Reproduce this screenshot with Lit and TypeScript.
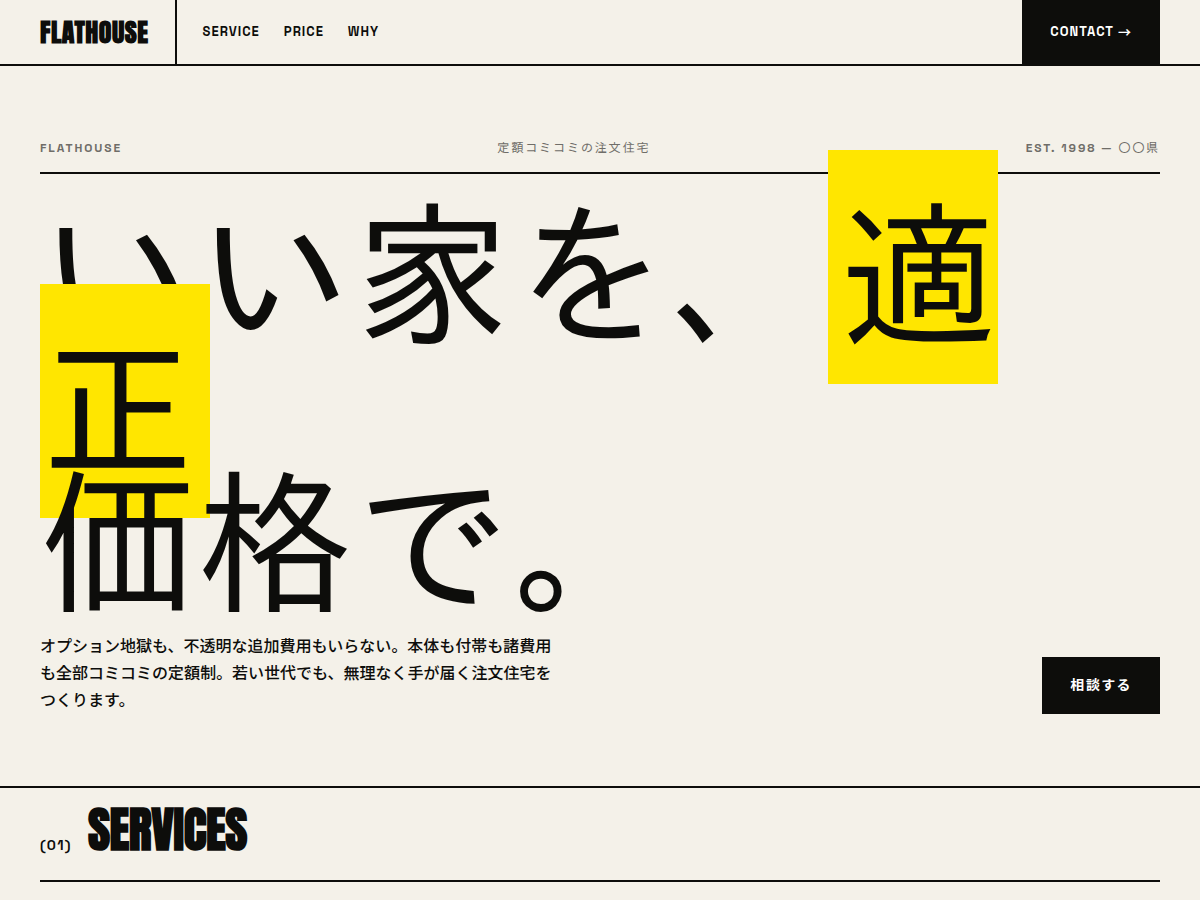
import { LitElement, html, css } from "lit";
import { customElement } from "lit/decorators.js";

@customElement("app-root")
export class AppRoot extends LitElement {
  static styles = css`
    :host {
      --ink: #0d0d0b;
      --paper: #f4f1e9;
      --accent: #ffe600;
      --label: "Space Grotesk", "Noto Sans JP", "Noto Sans CJK JP", sans-serif;
      --display: "Anton", "IPAGothic", "Noto Sans CJK JP", sans-serif;
      display: block;
      min-height: 100vh;
      background: var(--paper);
      color: var(--ink);
      font-family: var(--label);
    }
    * { box-sizing: border-box; }
    a { color: inherit; text-decoration: none; }
    .header {
      display: flex;
      align-items: stretch;
      height: 66px;
      padding: 0 40px;
      border-bottom: 2px solid var(--ink);
    }
    .logo {
      display: flex;
      align-items: center;
      padding-right: 26px;
      border-right: 2px solid var(--ink);
      font: 700 26px/40px var(--display);
      letter-spacing: 0.02em;
    }
    .nav, .contact {
      display: flex;
      align-items: center;
      font-size: 13px;
      line-height: 18px;
      letter-spacing: 1px;
    }
    .nav {
      gap: 24px;
      padding-left: 26px;
      font-weight: 600;
    }
    .contact {
      gap: 4px;
      margin-left: auto;
      padding: 0 28px;
      background: var(--ink);
      color: #fff;
      font-weight: 700;
    }
    .arrow { font-family: "Noto Sans CJK JP", sans-serif; }
    .hero {
      padding: 72px 40px;
      border-bottom: 2px solid var(--ink);
    }
    .meta {
      display: flex;
      justify-content: space-between;
      padding-bottom: 14px;
      border-bottom: 2px solid var(--ink);
      color: #6f6d68;
      font-size: 12px;
      font-weight: 600;
      line-height: 20px;
      letter-spacing: 0.16em;
    }
    .ja { font-weight: 400; }
    .headline {
      margin: 26px 0 31px;
      font-family: var(--display);
      font-size: 13vw;
      font-weight: 400;
      line-height: 0.86;
      letter-spacing: 0.01em;
    }
    .mark {
      padding: 0 0.08em;
      background: var(--accent);
      color: inherit;
    }
    .foot {
      display: flex;
      justify-content: space-between;
      align-items: flex-end;
      gap: 32px;
    }
    .lede {
      max-width: 520px;
      margin: 0;
      font-size: 16px;
      font-weight: 500;
      line-height: 27px;
    }
    .consult {
      padding: 18px 28px;
      border: 0;
      background: var(--ink);
      color: #fff;
      font: 700 14px/21px var(--label);
      letter-spacing: 0.1em;
    }
    .services { padding: 10px 40px 40px; }
    .section-head {
      display: flex;
      align-items: baseline;
      gap: 16px;
      padding-bottom: 18px;
      border-bottom: 2px solid var(--ink);
    }
    .num {
      font-size: 14px;
      font-weight: 600;
      letter-spacing: 0.1em;
    }
    .title {
      margin: 0;
      font: 700 48px/64px var(--display);
      letter-spacing: -0.01em;
    }
  `;

  render() {
    return html`
      <header class="header">
        <a class="logo" href="#">FLATHOUSE</a>
        <nav class="nav">
          <a href="#service">SERVICE</a>
          <a href="#price">PRICE</a>
          <a href="#why">WHY</a>
        </nav>
        <a class="contact" href="#contact">CONTACT <span class="arrow">→</span></a>
      </header>
      <main>
        <section class="hero">
          <div class="meta">
            <span>FLATHOUSE</span>
            <span class="ja" lang="ja">定額コミコミの注文住宅</span>
            <span lang="ja">EST. 1998 — <span class="ja">〇〇県</span></span>
          </div>
          <h1 class="headline" lang="ja">いい家を、<mark class="mark">適正</mark><br />価格で。</h1>
          <div class="foot">
            <p class="lede" lang="ja">オプション地獄も、不透明な追加費用もいらない。本体も付帯も諸費用も全部コミコミの定額制。若い世代でも、無理なく手が届く注文住宅をつくります。</p>
            <button class="consult" type="button">相談する</button>
          </div>
        </section>
        <section class="services" id="service">
          <div class="section-head">
            <span class="num">(01)</span>
            <h2 class="title">SERVICES</h2>
          </div>
        </section>
      </main>
    `;
  }
}
